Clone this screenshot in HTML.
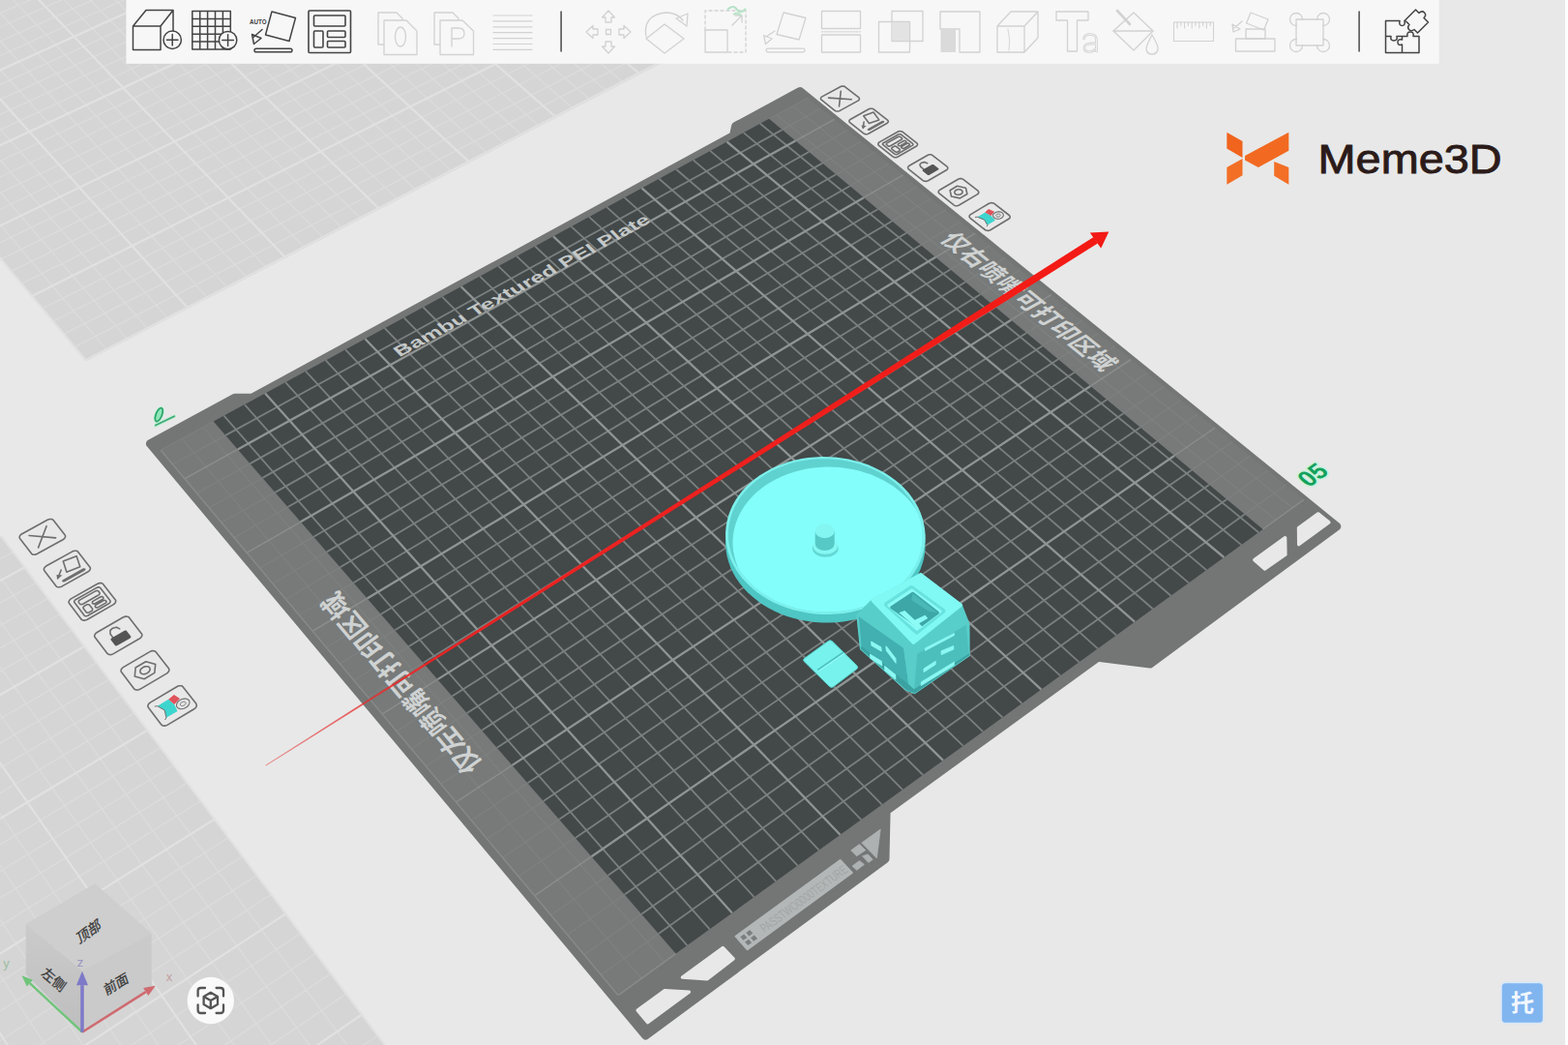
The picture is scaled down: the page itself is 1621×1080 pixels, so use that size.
<!DOCTYPE html><html><head><meta charset="utf-8"><title>view</title><style>html,body{margin:0;padding:0;background:#e8e8e8;overflow:hidden}svg{display:block}text{font-family:"Liberation Sans",sans-serif}</style></head><body>
<svg width="1621" height="1080" viewBox="0 0 1621 1080">
<rect width="1621" height="1080" fill="#e8e8e8"/><rect x="1618" width="3" height="1080" fill="#fdfdfd"/>
<g>
<path d="M89.6 369.7 L740.8 32.4 L381.7 -254.6 L-221.7 -0.6Z" fill="#d5d5d5" stroke="#d5d5d5" stroke-width="6" stroke-linejoin="round"/>
<path d="M110 361.1 L-205.1 -8.9 M131.2 350.1 L-185.8 -17 M152.2 339.2 L-166.6 -25.1 M173 328.4 L-147.6 -33.1 M214.1 307.1 L-110 -48.9 M234.5 296.6 L-91.3 -56.8 M254.6 286.1 L-72.8 -64.5 M274.6 275.7 L-54.5 -72.3 M314.1 255.3 L-18.1 -87.6 M333.7 245.1 L-0.1 -95.1 M353 235.1 L17.7 -102.7 M372.3 225.1 L35.5 -110.1 M410.2 205.4 L70.6 -124.9 M429 195.7 L88 -132.2 M447.7 186 L105.3 -139.5 M466.1 176.4 L122.5 -146.7 M502.7 157.5 L156.4 -161 M520.8 148.1 L173.3 -168.1 M538.7 138.8 L190 -175.1 M556.5 129.6 L206.6 -182.1 M591.7 111.4 L239.5 -195.9 M609.1 102.3 L255.7 -202.8 M626.3 93.4 L271.9 -209.6 M643.5 84.5 L288 -216.3 M677.4 66.9 L319.8 -229.7 M694.1 58.2 L335.6 -236.4 M710.8 49.6 L351.2 -242.9 M727.3 41.1 L366.8 -249.5 M77.3 358.7 L730.8 22.3 M66 345.3 L718 12.1 M54.9 332 L705.4 2 M43.9 318.9 L692.9 -8 M22.2 293.1 L668.1 -27.8 M11.6 280.4 L655.9 -37.5 M1 267.8 L643.8 -47.2 M-9.5 255.3 L631.8 -56.7 M-30.1 230.8 L608.2 -75.6 M-40.3 218.7 L596.5 -85 M-50.3 206.7 L584.9 -94.2 M-60.3 194.8 L573.4 -103.4 M-79.9 171.4 L550.7 -121.5 M-89.6 159.9 L539.5 -130.4 M-99.2 148.5 L528.4 -139.3 M-108.7 137.1 L517.4 -148.1 M-127.5 114.8 L495.7 -165.4 M-136.7 103.8 L485 -174 M-145.8 92.9 L474.3 -182.5 M-154.9 82.1 L463.7 -190.9 M-172.8 60.9 L442.9 -207.6 M-181.6 50.4 L432.6 -215.8 M-190.3 39.9 L422.3 -224 M-199 29.6 L412.2 -232.1 M-216.1 9.3 L392.2 -248.1 M-224.5 -0.8 L382.3 -256" stroke="#dcdcdc" stroke-width="1.3" fill="none"/>
<path d="M88.6 372.2 L-224.5 -0.8 M193.6 317.7 L-128.7 -41 M294.5 265.5 L-36.2 -80 M391.3 215.2 L53.1 -117.5 M484.5 166.9 L139.5 -153.9 M574.1 120.5 L223.1 -189 M660.5 75.7 L303.9 -223.1 M743.7 32.5 L382.3 -256 M88.6 372.2 L743.7 32.5 M33 305.9 L680.4 -17.9 M-19.9 243 L620 -66.2 M-70.2 183 L562 -112.5 M-118.1 125.9 L506.5 -156.8 M-163.9 71.4 L453.3 -199.3 M-207.6 19.4 L402.1 -240.1" stroke="#e1e1e1" stroke-width="2.2" fill="none"/>
</g>
<g>
<path d="M-656.2 1960.5 L453.5 1159.2 L0.7 557.6 L-959.9 1081.2Z" fill="#d5d5d5" stroke="#d5d5d5" stroke-width="6" stroke-linejoin="round"/>
<path d="M-619.8 1938.6 L-931.4 1063.1 M-581.2 1910.7 L-899.2 1045.6 M-543.2 1883.2 L-867.4 1028.3 M-505.6 1856.1 L-835.9 1011.1 M-431.9 1802.8 L-773.8 977.3 M-395.7 1776.7 L-743.3 960.7 M-360 1750.9 L-713.1 944.2 M-324.8 1725.4 L-683.1 927.9 M-255.6 1675.4 L-624.1 895.8 M-221.7 1650.9 L-595.1 880 M-188.2 1626.6 L-566.3 864.3 M-155 1602.7 L-537.8 848.8 M-90 1555.7 L-481.7 818.2 M-58 1532.6 L-454 803.1 M-26.5 1509.8 L-426.7 788.2 M4.7 1487.2 L-399.5 773.4 M66 1442.9 L-346 744.3 M96.1 1421.2 L-319.6 729.9 M125.8 1399.7 L-293.5 715.7 M155.3 1378.4 L-267.6 701.6 M213.1 1336.6 L-216.6 673.8 M241.5 1316.1 L-191.4 660.1 M269.6 1295.7 L-166.5 646.5 M297.4 1275.7 L-141.8 633.1 M352.1 1236.1 L-93 606.5 M379 1216.7 L-69 593.4 M405.6 1197.5 L-45.2 580.4 M431.9 1178.5 L-21.6 567.6 M-670.8 1932.1 L440.7 1136.8 M-682.6 1897.9 L423.7 1114.3 M-694.2 1864.2 L406.9 1092.1 M-705.6 1831.1 L390.4 1070.1 M-727.9 1766.5 L357.9 1027.1 M-738.7 1734.9 L342 1006 M-749.4 1703.9 L326.3 985.2 M-759.9 1673.3 L310.8 964.6 M-780.5 1613.5 L280.4 924.3 M-790.6 1584.3 L265.5 904.5 M-800.5 1555.5 L250.8 885 M-810.2 1527.2 L236.2 865.7 M-829.3 1471.8 L207.6 827.8 M-838.6 1444.7 L193.6 809.1 M-847.8 1418 L179.7 790.8 M-856.9 1391.6 L166 772.6 M-874.6 1340.1 L139.1 736.9 M-883.3 1314.9 L125.9 719.4 M-891.9 1290 L112.9 702.1 M-900.3 1265.5 L100 684.9 M-916.9 1217.4 L74.6 651.3 M-925 1193.9 L62.1 634.7 M-933 1170.7 L49.8 618.4 M-940.8 1147.8 L37.6 602.2 M-956.3 1102.8 L13.6 570.4 M-963.9 1080.8 L1.9 554.8" stroke="#dcdcdc" stroke-width="1.3" fill="none"/>
<path d="M-658.9 1966.9 L-963.9 1080.8 M-468.5 1829.3 L-804.7 994.1 M-290 1700.2 L-653.5 911.8 M-122.3 1579 L-509.6 833.4 M35.5 1465 L-372.6 758.8 M184.3 1357.4 L-242 687.6 M324.9 1255.8 L-117.3 619.7 M457.9 1159.7 L1.9 554.8 M-658.9 1966.9 L457.9 1159.7 M-716.8 1798.5 L374.1 1048.5 M-770.3 1643.2 L295.5 944.3 M-819.8 1499.3 L221.8 846.6 M-865.8 1365.7 L152.5 754.6 M-908.7 1241.3 L87.2 668 M-948.6 1125.2 L25.6 586.2" stroke="#e1e1e1" stroke-width="2.2" fill="none"/>
</g>
<path d="M667.4 1070.2 L915.2 887.7 L916.3 838 L1134.8 679.6 L1188.9 686.2 L1382 544 L827.1 94.3 L760.4 130.4 L758.2 140.4 L260.7 411.1 L242.8 411.1 L155.2 458.6Z" fill="#737675" stroke="#737675" stroke-width="8.6" stroke-linejoin="round"/>
<path d="M639.6 1028.3 L698.7 985.6 L220.7 435.6 L166.6 465.1Z" fill="#777a79"/>
<path d="M1305.5 547 L1348 516.3 L835 101 L795 122.8Z" fill="#777a79"/>
<path d="M698.7 985.6 L1305.5 547 L795 122.8 L220.7 435.6Z" fill="#434848"/>
<path d="M663.1 1011.3 L188.1 453.3 M686.9 994.1 L209.9 441.5 M1318.7 537.4 L802.7 118.6 M1336.2 524.8 L819.5 109.4 M621.9 1007.2 L680.8 965 M1286.8 531.5 L1329.2 501.1 M604.3 986.3 L663.2 944.7 M1268.3 516.1 L1310.7 486.1 M587.1 965.8 L645.7 924.6 M1250 500.9 L1292.3 471.2 M570 945.4 L628.5 904.8 M1231.9 485.8 L1274.1 456.5 M536.5 905.5 L594.7 865.9 M1196.3 456.2 L1238.4 427.6 M520.1 886 L578.1 846.8 M1178.8 441.7 L1220.8 413.4 M503.8 866.6 L561.7 828 M1161.5 427.3 L1203.4 399.3 M487.8 847.5 L545.5 809.3 M1144.3 413.1 L1186.2 385.3 M456.3 810 L513.7 772.8 M1110.6 385 L1152.3 357.9 M440.9 791.6 L498.1 754.8 M1094 371.2 L1135.6 344.4 M425.6 773.5 L482.7 737 M1077.6 357.6 L1119.1 331 M410.5 755.5 L467.4 719.5 M1061.3 344 L1102.8 317.8 M380.8 720.2 L437.5 685 M1029.3 317.4 L1070.6 291.8 M366.3 702.8 L422.7 668.1 M1013.5 304.3 L1054.8 278.9 M351.9 685.7 L408.2 651.3 M997.9 291.4 L1039.1 266.2 M337.7 668.7 L393.8 634.8 M982.5 278.5 L1023.6 253.7 M309.7 635.4 L365.5 602.2 M952.1 253.2 L993 228.9 M295.9 619.1 L351.6 586.2 M937.1 240.8 L977.9 216.7 M282.4 602.9 L337.9 570.4 M922.2 228.5 L963 204.6 M268.9 586.9 L324.3 554.8 M907.5 216.3 L948.2 192.7 M242.5 555.4 L297.5 524 M878.6 192.2 L919.1 169.1 M229.5 539.9 L284.4 508.9 M864.3 180.3 L904.7 157.5 M216.6 524.6 L271.4 493.9 M850.2 168.6 L890.5 145.9 M203.9 509.5 L258.5 479.1 M836.2 157 L876.4 134.6 M178.9 479.7 L233.2 449.9 M808.6 134.1 L848.7 112.1 M166.6 465.1 L220.7 435.6 M795 122.8 L835 101" stroke="#9a9e9e" stroke-opacity="0.2" stroke-width="1.1" fill="none"/>
<path d="M639.1 1028.7 L166.2 465.3 M639.6 1028.3 L698.7 985.6 M1305.5 547 L1348 516.3 M553.1 925.4 L611.5 885.2 M1214 471 L1256.2 442 M472 828.7 L529.5 790.9 M1127.4 399 L1169.2 371.5 M395.6 737.7 L452.4 702.1 M1045.2 330.7 L1086.6 304.7 M323.6 652 L379.6 618.4 M967.2 265.8 L1008.2 241.2 M255.6 571.1 L310.8 539.3 M893 204.2 L933.6 180.8 M191.4 494.5 L245.8 464.4 M822.4 145.5 L862.5 123.3" stroke="#b0b4b4" stroke-opacity="0.32" stroke-width="1.5" fill="none"/>
<path d="M710.4 977.1 L231.5 429.7 M733.7 960.3 L252.9 418.1 M779.6 927.1 L295.1 395.1 M802.2 910.8 L316 383.7 M824.6 894.6 L336.7 372.4 M846.7 878.6 L357.2 361.3 M890.3 847.1 L397.7 339.2 M911.8 831.6 L417.7 328.3 M933.1 816.2 L437.5 317.5 M954.2 801 L457.2 306.8 M995.7 770.9 L496.1 285.6 M1016.2 756.1 L515.3 275.1 M1036.4 741.5 L534.3 264.8 M1056.5 727 L553.2 254.5 M1096.1 698.4 L590.6 234.1 M1115.6 684.3 L609 224.1 M1134.9 670.3 L627.3 214.1 M1154.1 656.5 L645.5 204.2 M1191.8 629.2 L681.4 184.7 M1210.5 615.7 L699.1 175 M1228.9 602.4 L716.7 165.4 M1247.2 589.1 L734.2 155.9 M1283.3 563.1 L768.7 137.1 M1301.1 550.2 L785.8 127.8 M680.8 965 L1286.8 531.5 M663.2 944.7 L1268.3 516.1 M645.7 924.6 L1250 500.9 M628.5 904.8 L1231.9 485.8 M594.7 865.9 L1196.3 456.2 M578.1 846.8 L1178.8 441.7 M561.7 828 L1161.5 427.3 M545.5 809.3 L1144.3 413.1 M513.7 772.8 L1110.6 385 M498.1 754.8 L1094 371.2 M482.7 737 L1077.6 357.6 M467.4 719.5 L1061.3 344 M437.5 685 L1029.3 317.4 M422.7 668.1 L1013.5 304.3 M408.2 651.3 L997.9 291.4 M393.8 634.8 L982.5 278.5 M365.5 602.2 L952.1 253.2 M351.6 586.2 L937.1 240.8 M337.9 570.4 L922.2 228.5 M324.3 554.8 L907.5 216.3 M297.5 524 L878.6 192.2 M284.4 508.9 L864.3 180.3 M271.4 493.9 L850.2 168.6 M258.5 479.1 L836.2 157 M233.2 449.9 L808.6 134.1" stroke="#7a7f7f" stroke-width="1.8" fill="none"/>
<path d="M756.8 943.6 L274.1 406.5 M868.6 862.8 L377.5 350.2 M975 785.9 L476.7 296.2 M1076.4 712.6 L572 244.3 M1173 642.7 L663.5 194.4 M1265.3 576 L751.5 146.5 M611.5 885.2 L1214 471 M529.5 790.9 L1127.4 399 M452.4 702.1 L1045.2 330.7 M379.6 618.4 L967.2 265.8 M310.8 539.3 L893 204.2 M245.8 464.4 L822.4 145.5" stroke="#8f9494" stroke-width="2.3" fill="none"/>
<path d="M659.1 1044.1 L686.9 1023.8 L712.4 1025.2 L669.6 1056.6Z" fill="#e8e8e8" stroke="#e8e8e8" stroke-width="3.4" stroke-linejoin="round"/>
<path d="M705.4 1010 L747.2 979.5 L758.2 990.9 L731.3 1011.7Z" fill="#e8e8e8" stroke="#e8e8e8" stroke-width="3.4" stroke-linejoin="round"/>
<path d="M1362.7 530.9 L1342.5 545.7 L1342.7 562.7 L1373.9 539.9Z" fill="#e8e8e8" stroke="#e8e8e8" stroke-width="3.4" stroke-linejoin="round"/>
<path d="M1328.6 555.6 L1296.8 578.7 L1307.4 588 L1328.9 573.2Z" fill="#e8e8e8" stroke="#e8e8e8" stroke-width="3.4" stroke-linejoin="round"/>
<text transform="matrix(0.881,-0.473,0.70,0.72,413,369.2)" x="0" y="0" font-size="17" font-weight="bold" fill="#c4c8c8" textLength="296" lengthAdjust="spacingAndGlyphs" style="font-family:'Liberation Sans',sans-serif">Bambu Textured PEI Plate</text>
<text transform="matrix(-0.643,-0.766,0.89,-0.65,499,790)" x="0" y="0" font-size="26" font-weight="bold" fill="#cfd2d2" textLength="235" lengthAdjust="spacing" style="font-family:'Liberation Sans','Noto Sans CJK SC',sans-serif">仅左喷嘴可打印区域</text>
<text transform="matrix(0.777,0.629,-0.948,0.517,970.8,247.6)" x="0" y="0" font-size="24" font-weight="bold" fill="#cfd2d2" textLength="218" lengthAdjust="spacing" style="font-family:'Liberation Sans','Noto Sans CJK SC',sans-serif">仅右喷嘴可打印区域</text>
<path d="M760.6 967.7 L868.6 889 L880.8 901.9 L772.7 981.3Z" fill="#b3b7b7" stroke="#b3b7b7" stroke-width="2" stroke-linejoin="round"/>
<path d="M765.3 968.3 L769.2 965.5 L772.3 969 L768.5 971.8Z" fill="#7b7f7f"/>
<path d="M771.3 964 L775.1 961.1 L778.3 964.6 L774.4 967.5Z" fill="#7b7f7f"/>
<path d="M770.1 973.6 L774 970.8 L777.1 974.3 L773.2 977.1Z" fill="#7b7f7f"/>
<path d="M776 969.3 L779.9 966.5 L783.1 969.9 L779.2 972.8Z" fill="#7b7f7f"/>
<text transform="matrix(0.807,-0.591,0.677,0.752,790.5,964.1)" x="0" y="0" font-size="13" fill="#9ca0a0" fill-opacity="0.75" textLength="107.8" lengthAdjust="spacingAndGlyphs" style="font-family:'Liberation Sans',sans-serif">PASSTWO0000TEXTURE</text>
<path d="M890.8 871.1 L910.2 857.1 L906.4 886.9Z" fill="#adb1b1" stroke="#adb1b1" stroke-width="0.8" stroke-linejoin="round"/>
<path d="M879.8 878.8 L888.5 872.5 L894.8 878.7 L885.6 884.8Z" fill="#adb1b1" stroke="#adb1b1" stroke-width="0.8" stroke-linejoin="round"/>
<path d="M891.5 884.8 L897.3 882.9 L902.2 888.3 L897.8 891.5Z" fill="#adb1b1" stroke="#adb1b1" stroke-width="0.8" stroke-linejoin="round"/>
<path d="M881 895.1 L888.6 889.6 L893.4 893.4 L885.8 899.3Z" fill="#adb1b1" stroke="#adb1b1" stroke-width="0.8" stroke-linejoin="round"/>
<defs><linearGradient id="ax" gradientUnits="userSpaceOnUse" x1="274.7" y1="791.2" x2="1132.7" y2="248.2"><stop offset="0" stop-color="#e04040" stop-opacity="0.55"/><stop offset="0.2" stop-color="#ee2222" stop-opacity="0.95"/><stop offset="1" stop-color="#f41a14"/></linearGradient></defs>
<path d="M275 791.6 L1134.8 251.5 L1130.6 244.9 L274.4 790.8 Z" fill="url(#ax)"/>
<path d="M1146.3 239.6 L1126.8 240.6 L1138.2 256.6 Z" fill="#f21a14"/>
<path d="M930.8 509.2 L925.9 505.1 L920.7 501.3 L915.2 497.7 L909.5 494.5 L903.4 491.5 L897.2 488.9 L890.7 486.7 L884.1 484.8 L877.3 483.2 L870.5 482 L863.5 481.2 L856.5 480.8 L849.5 480.7 L842.6 481 L835.6 481.7 L828.8 482.7 L822 484.2 L815.4 485.9 L809 488.1 L802.7 490.5 L796.7 493.3 L791 496.5 L785.5 499.9 L780.4 503.6 L775.5 507.6 L771.1 511.9 L767 516.4 L763.3 521.2 L760 526.1 L757.2 531.2 L754.8 536.5 L752.9 541.9 L751.5 547.5 L750.6 553.1 L750.1 558.7 L750.2 564.4 L750.7 570.1 L751.8 575.7 L753.4 581.3 L755.4 586.9 L758 592.3 L761 597.5 L764.5 602.6 L768.5 607.5 L772.9 612.2 L777.7 616.6 L782.9 620.8 L788.4 624.7 L794.3 628.3 L800.5 631.5 L807 634.4 L813.7 636.9 L820.7 639 L827.8 640.7 L835 642.1 L842.3 643 L849.7 643.5 L857.1 643.6 L864.5 643.2 L871.9 642.5 L879.1 641.3 L886.2 639.7 L893.1 637.8 L899.9 635.4 L906.3 632.7 L912.5 629.6 L918.4 626.1 L924 622.4 L929.2 618.3 L933.9 614 L938.3 609.4 L942.3 604.5 L945.7 599.5 L948.8 594.3 L951.3 589 L953.3 583.5 L954.9 577.9 L955.9 572.3 L956.5 566.6 L956.5 560.9 L956 555.2 L955 549.6 L953.6 544 L951.7 538.6 L949.2 533.2 L946.4 528 L943.1 523 L939.4 518.2 L935.3 513.6Z" fill="#4ec6c4"/>
<path d="M750.1 558.7 L956.5 560.9 L956.5 552.3 L750.1 550.1 Z" fill="#4ec6c4"/>
<path d="M930.8 500.6 L925.9 496.5 L920.7 492.7 L915.2 489.1 L909.5 485.9 L903.4 482.9 L897.2 480.3 L890.7 478.1 L884.1 476.2 L877.3 474.6 L870.5 473.4 L863.5 472.6 L856.5 472.2 L849.5 472.1 L842.6 472.4 L835.6 473.1 L828.8 474.1 L822 475.6 L815.4 477.3 L809 479.5 L802.7 481.9 L796.7 484.7 L791 487.9 L785.5 491.3 L780.4 495 L775.5 499 L771.1 503.3 L767 507.8 L763.3 512.6 L760 517.5 L757.2 522.6 L754.8 527.9 L752.9 533.3 L751.5 538.9 L750.6 544.5 L750.1 550.1 L750.2 555.8 L750.7 561.5 L751.8 567.1 L753.4 572.7 L755.4 578.3 L758 583.7 L761 588.9 L764.5 594 L768.5 598.9 L772.9 603.6 L777.7 608 L782.9 612.2 L788.4 616.1 L794.3 619.7 L800.5 622.9 L807 625.8 L813.7 628.3 L820.7 630.4 L827.8 632.1 L835 633.5 L842.3 634.4 L849.7 634.9 L857.1 635 L864.5 634.6 L871.9 633.9 L879.1 632.7 L886.2 631.1 L893.1 629.2 L899.9 626.8 L906.3 624.1 L912.5 621 L918.4 617.5 L924 613.8 L929.2 609.7 L933.9 605.4 L938.3 600.8 L942.3 595.9 L945.7 590.9 L948.8 585.7 L951.3 580.4 L953.3 574.9 L954.9 569.3 L955.9 563.7 L956.5 558 L956.5 552.3 L956 546.6 L955 541 L953.6 535.4 L951.7 530 L949.2 524.6 L946.4 519.4 L943.1 514.4 L939.4 509.6 L935.3 505Z" fill="#7cf0ec"/>
<clipPath id="dc"><path d="M928.7 502 L924 498 L918.9 494.2 L913.6 490.8 L907.9 487.6 L902.1 484.8 L896 482.2 L889.7 480 L883.3 478.2 L876.7 476.7 L870 475.5 L863.3 474.7 L856.5 474.3 L849.6 474.2 L842.8 474.5 L836.1 475.2 L829.4 476.2 L822.8 477.6 L816.4 479.3 L810.2 481.4 L804.1 483.8 L798.2 486.5 L792.6 489.6 L787.3 492.9 L782.3 496.5 L777.6 500.4 L773.3 504.6 L769.3 509 L765.7 513.6 L762.6 518.4 L759.8 523.4 L757.5 528.6 L755.7 533.8 L754.3 539.2 L753.4 544.6 L752.9 550.1 L753 555.7 L753.5 561.2 L754.6 566.7 L756.1 572.1 L758.1 577.5 L760.6 582.8 L763.6 587.9 L767 592.8 L770.8 597.6 L775.1 602.2 L779.8 606.5 L784.8 610.5 L790.2 614.3 L796 617.7 L802 620.9 L808.3 623.7 L814.8 626.1 L821.6 628.2 L828.5 629.9 L835.5 631.2 L842.6 632 L849.8 632.5 L857 632.6 L864.2 632.3 L871.4 631.5 L878.4 630.4 L885.3 628.9 L892 627 L898.6 624.7 L904.9 622 L910.9 619 L916.6 615.7 L922 612 L927 608.1 L931.7 603.9 L935.9 599.4 L939.8 594.7 L943.2 589.8 L946.1 584.8 L948.6 579.5 L950.6 574.2 L952.1 568.8 L953.1 563.3 L953.6 557.8 L953.7 552.3 L953.2 546.7 L952.3 541.3 L950.9 535.9 L949 530.5 L946.6 525.4 L943.9 520.3 L940.7 515.4 L937 510.7 L933 506.2Z"/></clipPath>
<path d="M928.7 502 L924 498 L918.9 494.2 L913.6 490.8 L907.9 487.6 L902.1 484.8 L896 482.2 L889.7 480 L883.3 478.2 L876.7 476.7 L870 475.5 L863.3 474.7 L856.5 474.3 L849.6 474.2 L842.8 474.5 L836.1 475.2 L829.4 476.2 L822.8 477.6 L816.4 479.3 L810.2 481.4 L804.1 483.8 L798.2 486.5 L792.6 489.6 L787.3 492.9 L782.3 496.5 L777.6 500.4 L773.3 504.6 L769.3 509 L765.7 513.6 L762.6 518.4 L759.8 523.4 L757.5 528.6 L755.7 533.8 L754.3 539.2 L753.4 544.6 L752.9 550.1 L753 555.7 L753.5 561.2 L754.6 566.7 L756.1 572.1 L758.1 577.5 L760.6 582.8 L763.6 587.9 L767 592.8 L770.8 597.6 L775.1 602.2 L779.8 606.5 L784.8 610.5 L790.2 614.3 L796 617.7 L802 620.9 L808.3 623.7 L814.8 626.1 L821.6 628.2 L828.5 629.9 L835.5 631.2 L842.6 632 L849.8 632.5 L857 632.6 L864.2 632.3 L871.4 631.5 L878.4 630.4 L885.3 628.9 L892 627 L898.6 624.7 L904.9 622 L910.9 619 L916.6 615.7 L922 612 L927 608.1 L931.7 603.9 L935.9 599.4 L939.8 594.7 L943.2 589.8 L946.1 584.8 L948.6 579.5 L950.6 574.2 L952.1 568.8 L953.1 563.3 L953.6 557.8 L953.7 552.3 L953.2 546.7 L952.3 541.3 L950.9 535.9 L949 530.5 L946.6 525.4 L943.9 520.3 L940.7 515.4 L937 510.7 L933 506.2Z" fill="#5fd2cf"/>
<path d="M933.3 510.4 L928.6 506.4 L923.5 502.6 L918.2 499.2 L912.5 496 L906.7 493.2 L900.6 490.6 L894.3 488.4 L887.9 486.6 L881.3 485.1 L874.6 483.9 L867.9 483.1 L861.1 482.7 L854.2 482.6 L847.4 482.9 L840.7 483.6 L834 484.6 L827.4 486 L821 487.7 L814.8 489.8 L808.7 492.2 L802.8 494.9 L797.2 498 L791.9 501.3 L786.9 504.9 L782.2 508.8 L777.9 513 L773.9 517.4 L770.3 522 L767.2 526.8 L764.4 531.8 L762.1 537 L760.3 542.2 L758.9 547.6 L758 553 L757.5 558.5 L757.6 564.1 L758.1 569.6 L759.2 575.1 L760.7 580.5 L762.7 585.9 L765.2 591.2 L768.2 596.3 L771.6 601.2 L775.4 606 L779.7 610.6 L784.4 614.9 L789.4 618.9 L794.8 622.7 L800.6 626.1 L806.6 629.3 L812.9 632.1 L819.4 634.5 L826.2 636.6 L833.1 638.3 L840.1 639.6 L847.2 640.4 L854.4 640.9 L861.6 641 L868.8 640.7 L876 639.9 L883 638.8 L889.9 637.3 L896.6 635.4 L903.2 633.1 L909.5 630.4 L915.5 627.4 L921.2 624.1 L926.6 620.4 L931.6 616.5 L936.3 612.3 L940.5 607.8 L944.4 603.1 L947.8 598.2 L950.7 593.2 L953.2 587.9 L955.2 582.6 L956.7 577.2 L957.7 571.7 L958.2 566.2 L958.3 560.7 L957.8 555.1 L956.9 549.7 L955.5 544.3 L953.6 538.9 L951.2 533.8 L948.5 528.7 L945.3 523.8 L941.6 519.1 L937.6 514.6Z" fill="#84fefa" clip-path="url(#dc)"/>
<ellipse cx="853.3" cy="566.8" rx="13.4" ry="9" fill="#63d8d5"/>
<ellipse cx="853.2" cy="564.6" rx="12.6" ry="8.2" fill="#86f8f3"/>
<path d="M842.7 548.9 L842.7 561.8 A10 7.2 0 0 0 862.7 561.8 L862.7 548.9 Z" fill="#56c9c7"/>
<ellipse cx="852.7" cy="548.9" rx="10" ry="7.3" fill="#84f6f1"/>
<path d="M831.3 680.6 L856.6 662.3 Q858.6 661 860.4 662.8 L886.2 688.2 Q887.6 690 885.8 691.4 L861.5 709.8 Q859.5 711.2 857.6 709.6 L831.2 683.6 Q829.8 682 831.3 680.6Z" fill="#78f2ed" stroke="#54cbc8" stroke-width="1"/>
<path d="M845.2 692.3 L872.2 673.8" stroke="#4cc0be" stroke-width="1.6" fill="none"/>
<path d="M846.4 693.6 L873.4 675.2" stroke="#9afcf8" stroke-width="1" fill="none"/>
<path d="M951.9 593.1 L994 625.1 L1001.7 645 L1001.9 677.6 L945.7 716.4 L936.9 713.1 L889.7 670.6 L886.1 635.8 L901.4 620.3 Z" fill="#57ceca" stroke="#57ceca" stroke-width="1.6" stroke-linejoin="round"/>
<path d="M889.7 670.6 L936.9 713.1 L945.7 716.4 L1001.9 677.6 L1001.7 674.4 L945 711.9 L939.4 707.1 L890.8 666.8 Z" fill="#3ba1a1" />
<path d="M887.8 637.2 L934.2 670 L939.2 707.1 L890.6 667.8 Z" fill="#42b0b0" />
<path d="M948.1 676.1 L998.9 645.8 L1001.4 675.8 L945 712.2 Z" fill="#4cbfbd" />
<path d="M934.2 670 L945 664.2 L948.1 676.1 L945 712.2 L939.2 707.1 Z" fill="#58cdca" />
<path d="M902.2 620.6 L951.9 593.9 L993.3 625.3 L944.4 664.2 Z" fill="#80f8f3" stroke="#80f8f3" stroke-width="3.5" stroke-linejoin="round"/>
<path d="M916.5 624.7 L942.2 607.5 L975 631.4 L947.8 653.1 Z" fill="#68e2de" stroke="#68e2de" stroke-width="5" stroke-linejoin="round"/>
<path d="M918.6 625.6 L942.5 609.7 L972.5 631.7 L948.1 650.6 Z" fill="#8afbf6" stroke="#8afbf6" stroke-width="2.5" stroke-linejoin="round"/>
<path d="M921.7 627.8 L943.6 613.3 L969.4 633.3 L950 647.8 Z" fill="#3da7a8" stroke="#3da7a8" stroke-width="3" stroke-linejoin="round"/>
<path d="M943.6 613.3 L969.4 633.3 L960.3 631.7 L942.2 620.3 Z" fill="#49b8b7" />
<path d="M929.4 633.3 L935.3 631.1 L945.7 640.8 L956.4 635.8 L959.2 638.9 L950.3 644.2 L953.6 648.1 L949.2 650.3 Z" fill="#8cfbf6" />
<path d="M900.8 663.3 L910.6 668.9 L911.1 672.8 L901.1 666.9 Z" fill="#8cf8f3" stroke="#8cf8f3" stroke-width="1.2" stroke-linejoin="round"/>
<path d="M899.7 676.4 L911.1 683.6 L911.7 687.8 L900 680.3 Z" fill="#8cf8f3" stroke="#8cf8f3" stroke-width="1.2" stroke-linejoin="round"/>
<path d="M916.1 668.1 L925.8 680.6 L926.1 685 L916.4 672.2 Z" fill="#8cf8f3" stroke="#8cf8f3" stroke-width="1.2" stroke-linejoin="round"/>
<path d="M914.7 688.6 L925.6 697.5 L925.8 701.9 L915 692.8 Z" fill="#8cf8f3" stroke="#8cf8f3" stroke-width="1.2" stroke-linejoin="round"/>
<path d="M956.4 670 L986.4 654.4 L986.4 656.7 L956.4 672.5 Z" fill="#8cf8f3" stroke="#8cf8f3" stroke-width="0.8" stroke-linejoin="round"/>
<path d="M973.1 672.8 L985.8 667.5 L985.8 671.1 L973.1 676.7 Z" fill="#8cf8f3" stroke="#8cf8f3" stroke-width="0.8" stroke-linejoin="round"/>
<path d="M955 691.1 L967.2 683.3 L967.2 686.7 L955 694.7 Z" fill="#8cf8f3" stroke="#8cf8f3" stroke-width="0.8" stroke-linejoin="round"/>
<path d="M952.2 705 L986.4 684.2 L986.4 687.5 L952.2 708.6 Z" fill="#8cf8f3" stroke="#8cf8f3" stroke-width="0.8" stroke-linejoin="round"/>
<path d="M55.1 537.5 L54.4 536.9 L53.2 536.5 L51.9 536.5 L50.5 536.8 L49.1 537.3 L22.8 551.7 L21.6 552.5 L20.7 553.5 L20.2 554.6 L20.2 555.6 L20.5 556.4 L32.5 572.1 L33.3 572.8 L34.4 573.2 L35.7 573.2 L37.2 572.9 L38.6 572.3 L65 557.8 L66.2 556.9 L67 555.9 L67.5 554.9 L67.6 553.9 L67.2 553Z M30.1 553.5 L57.6 555.9 M39.6 565.9 L48.1 543.7" fill="none" stroke="#6e6e6e" stroke-width="1.6" stroke-linejoin="round" stroke-linecap="round"/>
<path d="M80.6 570.3 L79.8 569.6 L78.7 569.3 L77.4 569.2 L75.9 569.5 L74.6 570.1 L48.1 584.8 L46.9 585.7 L46 586.7 L45.5 587.7 L45.4 588.8 L45.8 589.7 L58 605.8 L58.8 606.4 L60 606.8 L61.3 606.8 L62.8 606.5 L64.2 605.9 L90.8 591 L92 590.2 L92.8 589.2 L93.3 588.1 L93.4 587 L93 586.2Z M68.9 591.2 L65.3 580 L79.1 574.7 L82.8 585.8Z M63.2 589 L59.8 597.5" fill="none" stroke="#6e6e6e" stroke-width="1.6" stroke-linejoin="round" stroke-linecap="round"/>
<path d="M59 599.1 L64.5 594.6 L58.5 594Z M88.2 587.6 L87.8 587.4 L87.3 587.2 L86.8 587.2 L86.2 587.3 L85.6 587.6 L65.3 598.9 L64.8 599.3 L64.5 599.7 L64.2 600.1 L64.2 600.6 L64.4 601 L64.5 601.2 L64.9 601.5 L65.4 601.6 L65.9 601.6 L66.5 601.5 L67.1 601.2 L87.4 589.9 L87.9 589.5 L88.3 589.1 L88.5 588.7 L88.5 588.2 L88.3 587.9Z" fill="#6e6e6e"/>
<path d="M106.6 603.7 L105.8 603 L104.7 602.6 L103.3 602.6 L101.8 602.9 L100.5 603.5 L73.8 618.6 L72.6 619.4 L71.7 620.5 L71.2 621.6 L71.1 622.6 L71.5 623.5 L84 640 L84.9 640.7 L86 641.1 L87.4 641.1 L88.9 640.8 L90.3 640.2 L117.1 624.9 L118.3 624 L119.1 623 L119.6 621.9 L119.7 620.8 L119.3 619.9Z M103.6 607.6 L103.1 607.2 L102.4 606.9 L101.6 606.9 L100.8 607.1 L100 607.4 L78.2 619.7 L77.5 620.2 L77 620.9 L76.7 621.5 L76.7 622.1 L76.9 622.6 L87.1 636.1 L87.6 636.5 L88.3 636.7 L89.1 636.7 L89.9 636.5 L90.8 636.2 L112.6 623.7 L113.3 623.2 L113.8 622.6 L114.1 622 L114.1 621.4 L113.9 620.8Z M101.8 611 L101.4 610.7 L100.8 610.5 L100.1 610.5 L99.4 610.6 L98.7 610.9 L82.5 620.1 L81.9 620.5 L81.5 621 L81.2 621.6 L81.2 622.1 L81.4 622.6 L82.5 624.1 L83 624.4 L83.5 624.6 L84.2 624.6 L84.9 624.5 L85.7 624.2 L101.8 615 L102.4 614.6 L102.9 614.1 L103.1 613.5 L103.1 613 L102.9 612.5Z M92.5 625.2 L92.1 624.9 L91.5 624.7 L90.8 624.7 L90.1 624.8 L89.4 625.1 L87.3 626.3 L86.7 626.8 L86.2 627.3 L86 627.8 L86 628.4 L86.2 628.8 L89.2 632.7 L89.6 633.1 L90.1 633.3 L90.8 633.3 L91.6 633.1 L92.3 632.8 L94.4 631.6 L95 631.2 L95.4 630.7 L95.7 630.1 L95.7 629.6 L95.5 629.1Z M106.4 617 L106.1 616.7 L105.6 616.6 L105 616.6 L104.4 616.7 L103.8 617 L96.5 621.1 L96 621.5 L95.6 621.9 L95.4 622.4 L95.4 622.8 L95.5 623.2 L95.9 623.6 L96.2 623.9 L96.7 624.1 L97.2 624.1 L97.9 624 L98.4 623.7 L105.8 619.5 L106.3 619.2 L106.7 618.7 L106.9 618.3 L106.9 617.8 L106.7 617.5Z M109.4 620.9 L109.1 620.6 L108.6 620.5 L108 620.4 L107.4 620.6 L106.8 620.8 L99.4 625 L98.9 625.4 L98.6 625.8 L98.4 626.3 L98.3 626.7 L98.5 627.1 L98.8 627.5 L99.2 627.8 L99.7 628 L100.2 628 L100.8 627.9 L101.4 627.6 L108.8 623.4 L109.3 623 L109.7 622.6 L109.9 622.1 L109.9 621.7 L109.7 621.3Z" fill="none" stroke="#6e6e6e" stroke-width="1.6" stroke-linejoin="round" stroke-linecap="round"/>
<path d="M133.5 638.2 L132.6 637.5 L131.5 637.2 L130.1 637.1 L128.6 637.4 L127.2 638 L100.4 653.5 L99.2 654.3 L98.3 655.4 L97.8 656.5 L97.7 657.6 L98.1 658.6 L111 675.4 L111.8 676.1 L113 676.5 L114.4 676.6 L115.9 676.3 L117.3 675.6 L144.2 660 L145.5 659.1 L146.3 658 L146.8 656.9 L146.8 655.8 L146.4 654.9Z M116.7 658.7 L114 655.2 L113.9 651.7 L116.5 649.2 L120.4 648.3 L123.7 649.9" fill="none" stroke="#6e6e6e" stroke-width="1.6" stroke-linejoin="round" stroke-linecap="round"/>
<path d="M130.9 652 L130.6 651.7 L130.1 651.6 L129.5 651.6 L128.9 651.7 L128.3 651.9 L115.6 659.3 L115.1 659.7 L114.7 660.1 L114.5 660.6 L114.5 661 L114.7 661.4 L118.9 667 L119.2 667.3 L119.7 667.4 L120.3 667.4 L120.9 667.3 L121.5 667 L134.3 659.7 L134.8 659.3 L135.2 658.8 L135.4 658.4 L135.4 657.9 L135.2 657.5Z" fill="#555"/>
<path d="M161.1 673.8 L160.3 673.1 L159.1 672.7 L157.7 672.6 L156.2 672.9 L154.8 673.6 L127.8 689.4 L126.5 690.3 L125.6 691.4 L125.1 692.5 L125.1 693.6 L125.5 694.6 L138.7 711.9 L139.5 712.6 L140.7 713 L142.2 713.1 L143.7 712.7 L145.1 712.1 L172.2 696.1 L173.5 695.1 L174.3 694.1 L174.8 692.9 L174.8 691.8 L174.4 690.8Z M160.7 686.4 L150.8 683.7 L140.1 690 L139.3 699 L149.1 701.8 L159.8 695.4Z M154.6 690 L153.7 689.2 L152.4 688.8 L150.9 688.7 L149.3 689.1 L147.7 689.8 L146.4 690.8 L145.4 691.9 L144.9 693.2 L144.9 694.4 L145.3 695.4 L146.3 696.2 L147.6 696.6 L149.1 696.7 L150.7 696.4 L152.2 695.7 L153.6 694.7 L154.5 693.5 L155.1 692.2 L155.1 691Z" fill="none" stroke="#6e6e6e" stroke-width="1.6" stroke-linejoin="round" stroke-linecap="round"/>
<path d="M189.2 709.9 L188.3 709.1 L187.1 708.7 L185.7 708.7 L184.2 709 L182.8 709.7 L155.6 725.9 L154.3 726.8 L153.4 727.9 L153 729.1 L152.9 730.2 L153.4 731.2 L166.8 748.9 L167.7 749.7 L168.9 750.1 L170.4 750.1 L171.9 749.8 L173.3 749.1 L200.7 732.7 L201.9 731.8 L202.8 730.7 L203.2 729.5 L203.2 728.3 L202.8 727.3Z" fill="none" stroke="#6e6e6e" stroke-width="1.6" stroke-linejoin="round" stroke-linecap="round"/>
<path d="M162.7 729.7 L174.2 722.8 L180.2 728 L183.5 734.9 L171.9 741.8 L170.2 734Z" fill="#3ed5cf"/>
<path d="M174.2 722.8 L179.9 718.1 L186 721.9 L180.2 728Z" fill="#e0525c"/>
<path d="M159.8 730.1 L162.7 729.7 L170.2 734 L171.9 741.8 L170.5 744" fill="none" stroke="#6e6e6e" stroke-width="1"/>
<path d="M195.3 723.7 L194 722.7 L192.3 722.1 L190.3 722.1 L188.2 722.5 L186.2 723.4 L184.4 724.8 L183.2 726.3 L182.5 728 L182.5 729.6 L183.1 731 L184.3 732.1 L186.1 732.6 L188.1 732.7 L190.2 732.2 L192.2 731.3 L194 730 L195.2 728.4 L195.9 726.7 L195.9 725.1Z" fill="#e4e4e4" stroke="#6e6e6e" stroke-width="1.1"/>
<path d="M191.7 725.9 L191.2 725.4 L190.5 725.2 L189.7 725.2 L188.8 725.4 L187.9 725.7 L187.2 726.3 L186.7 726.9 L186.4 727.6 L186.4 728.3 L186.7 728.9 L187.2 729.3 L187.9 729.5 L188.7 729.6 L189.6 729.4 L190.4 729 L191.2 728.4 L191.7 727.8 L192 727.1 L192 726.4Z" fill="none" stroke="#6e6e6e" stroke-width="0.9"/>
<path d="M873.7 89.8 L872.9 89.3 L871.8 89.1 L870.7 89.1 L869.6 89.3 L868.6 89.7 L849.9 99.9 L849.1 100.4 L848.6 101.1 L848.4 101.9 L848.6 102.6 L849.2 103.2 L863.1 114.3 L863.9 114.7 L865 115 L866.1 115 L867.2 114.8 L868.3 114.4 L887 104.1 L887.8 103.5 L888.3 102.8 L888.4 102.1 L888.2 101.3 L887.7 100.7Z M856.5 101.1 L880.3 102.8 M867.5 109.9 L869.3 94.2" fill="none" stroke="#6e6e6e" stroke-width="1.6" stroke-linejoin="round" stroke-linecap="round"/>
<path d="M903.2 112.9 L902.4 112.5 L901.4 112.2 L900.2 112.2 L899.1 112.4 L898.1 112.8 L879.4 123.2 L878.6 123.8 L878 124.5 L877.9 125.3 L878.1 126 L878.6 126.6 L892.8 137.9 L893.7 138.4 L894.7 138.6 L895.9 138.7 L897 138.4 L898.1 138 L916.8 127.5 L917.6 126.9 L918.1 126.2 L918.3 125.4 L918.1 124.7 L917.5 124.1Z M898.5 127.6 L892.7 119.8 L903 116 L908.8 123.9Z M893.1 126.1 L892.3 132.1" fill="none" stroke="#6e6e6e" stroke-width="1.6" stroke-linejoin="round" stroke-linecap="round"/>
<path d="M892.1 133.3 L895.6 130 L890.4 129.6Z M913.8 125.1 L913.5 124.9 L913 124.8 L912.5 124.8 L912.1 124.9 L911.6 125.1 L897.3 133.1 L897 133.3 L896.8 133.6 L896.7 134 L896.8 134.3 L897 134.5 L897.2 134.7 L897.6 134.9 L898 135 L898.5 135 L899 134.9 L899.4 134.7 L913.7 126.7 L914 126.5 L914.2 126.2 L914.3 125.9 L914.2 125.5 L914 125.3Z" fill="#6e6e6e"/>
<path d="M933.2 136.4 L932.4 135.9 L931.3 135.7 L930.2 135.6 L929 135.8 L928 136.3 L909.2 146.9 L908.4 147.5 L907.9 148.2 L907.8 149 L908 149.7 L908.5 150.4 L923 161.9 L923.9 162.4 L925 162.6 L926.1 162.7 L927.3 162.4 L928.3 162 L947.1 151.3 L947.9 150.7 L948.4 149.9 L948.6 149.2 L948.3 148.4 L947.8 147.8Z M931.6 139.1 L931.1 138.8 L930.5 138.7 L929.8 138.7 L929.2 138.8 L928.6 139 L913.3 147.7 L912.8 148 L912.5 148.5 L912.4 148.9 L912.5 149.4 L912.9 149.7 L924.7 159.1 L925.2 159.4 L925.8 159.5 L926.5 159.6 L927.2 159.4 L927.8 159.2 L943.1 150.4 L943.6 150.1 L943.9 149.7 L943.9 149.2 L943.8 148.8 L943.5 148.4Z M930.9 141.6 L930.5 141.3 L930 141.2 L929.4 141.2 L928.8 141.3 L928.3 141.5 L917 147.9 L916.5 148.2 L916.3 148.6 L916.2 149 L916.3 149.4 L916.6 149.7 L917.9 150.7 L918.4 151 L918.9 151.1 L919.5 151.1 L920.1 151 L920.6 150.8 L931.9 144.3 L932.3 144 L932.6 143.7 L932.7 143.3 L932.5 142.9 L932.3 142.6Z M926.6 151.5 L926.2 151.3 L925.6 151.1 L925.1 151.1 L924.5 151.2 L924 151.5 L922.5 152.3 L922.1 152.6 L921.8 153 L921.7 153.4 L921.9 153.7 L922.1 154.1 L925.6 156.8 L926 157 L926.5 157.1 L927.1 157.2 L927.7 157.1 L928.2 156.8 L929.7 156 L930.1 155.7 L930.4 155.3 L930.4 154.9 L930.3 154.6 L930 154.2Z M936.3 145.8 L935.9 145.6 L935.5 145.5 L935 145.4 L934.5 145.5 L934.1 145.7 L928.9 148.6 L928.6 148.9 L928.4 149.2 L928.3 149.5 L928.4 149.8 L928.6 150.1 L929 150.4 L929.4 150.6 L929.8 150.7 L930.3 150.7 L930.8 150.6 L931.2 150.5 L936.4 147.5 L936.7 147.3 L936.9 147 L937 146.6 L936.9 146.3 L936.7 146.1Z M939.7 148.5 L939.4 148.3 L938.9 148.2 L938.4 148.1 L938 148.2 L937.5 148.4 L932.4 151.4 L932 151.6 L931.8 151.9 L931.8 152.2 L931.8 152.6 L932.1 152.8 L932.5 153.1 L932.8 153.3 L933.3 153.4 L933.7 153.4 L934.2 153.4 L934.7 153.2 L939.8 150.2 L940.2 150 L940.4 149.7 L940.4 149.3 L940.3 149 L940.1 148.8Z" fill="none" stroke="#6e6e6e" stroke-width="1.6" stroke-linejoin="round" stroke-linecap="round"/>
<path d="M964.1 160.6 L963.3 160.1 L962.2 159.8 L961 159.8 L959.9 160 L958.8 160.5 L940 171.3 L939.2 171.9 L938.7 172.6 L938.6 173.4 L938.8 174.2 L939.4 174.8 L954.2 186.6 L955 187.1 L956.1 187.3 L957.3 187.4 L958.5 187.1 L959.5 186.7 L978.4 175.8 L979.2 175.1 L979.7 174.4 L979.8 173.6 L979.6 172.8 L979 172.2Z M954.9 174.9 L951.8 172.4 L950.9 170 L952.6 168.3 L955.6 167.6 L958.7 168.7" fill="none" stroke="#6e6e6e" stroke-width="1.6" stroke-linejoin="round" stroke-linecap="round"/>
<path d="M965.3 170.2 L964.9 170 L964.5 169.9 L964 169.9 L963.5 170 L963.1 170.2 L954.2 175.3 L953.8 175.6 L953.6 175.9 L953.6 176.2 L953.7 176.5 L953.9 176.8 L958.8 180.7 L959.2 180.9 L959.6 181 L960.1 181 L960.6 180.9 L961 180.7 L969.9 175.6 L970.3 175.3 L970.5 175 L970.5 174.7 L970.4 174.3 L970.2 174.1Z" fill="#555"/>
<path d="M995.8 185.4 L994.9 184.9 L993.8 184.6 L992.7 184.6 L991.5 184.8 L990.5 185.2 L971.6 196.3 L970.8 196.9 L970.3 197.7 L970.1 198.5 L970.4 199.2 L971 199.9 L986.1 211.9 L987 212.4 L988.1 212.7 L989.3 212.7 L990.4 212.5 L991.5 212 L1010.4 200.9 L1011.2 200.2 L1011.7 199.5 L1011.8 198.7 L1011.5 197.9 L1011 197.2Z M998.4 194.2 L989.5 192.3 L982.1 196.7 L983.5 203 L992.4 204.9 L999.9 200.5Z M994.2 196.7 L993.2 196.1 L992.1 195.8 L990.8 195.8 L989.5 196 L988.4 196.5 L987.5 197.2 L987 198 L986.8 198.9 L987.1 199.7 L987.7 200.5 L988.7 201 L989.9 201.3 L991.2 201.3 L992.4 201.1 L993.6 200.6 L994.4 199.9 L995 199.1 L995.1 198.2 L994.8 197.4Z" fill="none" stroke="#6e6e6e" stroke-width="1.6" stroke-linejoin="round" stroke-linecap="round"/>
<path d="M1027.8 210.4 L1026.9 209.9 L1025.8 209.7 L1024.6 209.6 L1023.5 209.9 L1022.4 210.3 L1003.5 221.6 L1002.7 222.2 L1002.2 223 L1002.1 223.8 L1002.3 224.6 L1002.9 225.3 L1018.4 237.5 L1019.3 238 L1020.4 238.3 L1021.6 238.4 L1022.8 238.1 L1023.8 237.7 L1042.8 226.3 L1043.6 225.6 L1044.1 224.8 L1044.2 224 L1043.9 223.2 L1043.3 222.5Z" fill="none" stroke="#6e6e6e" stroke-width="1.6" stroke-linejoin="round" stroke-linecap="round"/>
<path d="M1010.4 224.2 L1018.3 219.5 L1024.6 223 L1028.9 227.8 L1020.9 232.6 L1017.6 227.2Z" fill="#3ed5cf"/>
<path d="M1018.3 219.5 L1022 216.1 L1028 218.8 L1024.6 223Z" fill="#e0525c"/>
<path d="M1008 224.5 L1010.4 224.2 L1017.6 227.2 L1020.9 232.6 L1020.2 234.1" fill="none" stroke="#6e6e6e" stroke-width="1"/>
<path d="M1036.2 220 L1034.9 219.3 L1033.3 218.9 L1031.6 218.9 L1030 219.2 L1028.5 219.9 L1027.3 220.8 L1026.7 221.9 L1026.5 223 L1026.9 224.1 L1027.7 225.1 L1029 225.8 L1030.6 226.2 L1032.3 226.3 L1033.9 226 L1035.4 225.3 L1036.5 224.4 L1037.2 223.3 L1037.4 222.1 L1037 221Z" fill="#e4e4e4" stroke="#6e6e6e" stroke-width="1.1"/>
<path d="M1033.7 221.5 L1033.2 221.2 L1032.5 221.1 L1031.8 221.1 L1031.1 221.2 L1030.5 221.5 L1030 221.8 L1029.8 222.3 L1029.7 222.8 L1029.8 223.2 L1030.2 223.6 L1030.7 223.9 L1031.4 224.1 L1032.1 224.1 L1032.8 224 L1033.4 223.7 L1033.8 223.3 L1034.1 222.9 L1034.2 222.4 L1034 221.9Z" fill="none" stroke="#6e6e6e" stroke-width="0.9"/>
<text transform="matrix(0.814,-0.581,0.855,0.692,1353.2,504.2)" x="0" y="0" font-size="24" font-weight="bold" fill="#c6f2d9" stroke="#c6f2d9" stroke-width="3.2" stroke-linejoin="round" opacity="0.9" style="font-family:'Liberation Sans',sans-serif">05</text>
<text transform="matrix(0.814,-0.581,0.855,0.692,1353.2,504.2)" x="0" y="0" font-size="24" font-weight="bold" fill="#12a15c" style="font-family:'Liberation Sans',sans-serif">05</text>
<g transform="translate(164.3 428.6) rotate(22)"><ellipse rx="3.3" ry="7.6" fill="#8fe6b8" stroke="#bdf0d5" stroke-width="3" opacity=".8"/><ellipse rx="3.1" ry="7.4" fill="#8fe6b8" stroke="#2aa468" stroke-width="1.7"/></g>
<path d="M160.8 439.6 L180.2 430.2" stroke="#b9efd2" stroke-width="3.6" stroke-linecap="round" opacity=".8"/>
<path d="M160.8 439.6 L180.2 430.2" stroke="#3bab74" stroke-width="1.7" stroke-linecap="round"/>
<rect x="130.4" y="-2" width="1357.3" height="67.8" fill="#f7f7f7"/>
<g fill="none" stroke="#444" stroke-width="1.5" stroke-linejoin="round" stroke-linecap="round" ><path d="M137.5 27 L166 27 L166 51.5 L137.5 51.5Z M137.5 27 L151 10.5 L179 10.5 L166 27 M179 10.5 L179 36"/><circle cx="178.2" cy="41.3" r="9.2" fill="#f7f7f7"/><path d="M172.4 41.3H184 M178.2 35.5V47.1"/></g>
<g fill="none" stroke="#444" stroke-width="1.5" stroke-linejoin="round" stroke-linecap="round" ><path d="M198.8 11.5V51M206.7 11.5V51M214.6 11.5V51M222.5 11.5V51M230.4 11.5V51M238.3 11.5V51M198.8 11.5H238.3M198.8 19.4H238.3M198.8 27.3H238.3M198.8 35.2H238.3M198.8 43.1H238.3M198.8 51H238.3"/><circle cx="235.6" cy="41.6" r="9.2" fill="#f7f7f7"/><path d="M229.8 41.6H241.4 M235.6 35.8V47.4"/></g>
<g fill="none" stroke="#444" stroke-width="1.5" stroke-linejoin="round" stroke-linecap="round" ><path d="M281 12 L305.5 18.5 L299 42.5 L274.5 36Z"/><rect x="263" y="50.2" width="39" height="3.6" rx="1.8"/><path d="M271 30.5 L262 38.5"/><path d="M260.5 35.5 L262.5 45.5 L270 39.5Z"/></g>
<text x="258" y="24.5" font-size="6.6" font-weight="bold" fill="#3d3d3d" textLength="17.5" lengthAdjust="spacingAndGlyphs">AUTO</text>
<g fill="none" stroke="#444" stroke-width="1.6" stroke-linejoin="round" stroke-linecap="round" ><rect x="319" y="11" width="43.5" height="43.5" rx="1"/><rect x="324.5" y="16" width="32.5" height="11" rx="1"/><rect x="324.5" y="32" width="9.5" height="17" rx="1"/><rect x="338.5" y="32" width="18.5" height="6.5" rx="1"/><rect x="338.5" y="42.5" width="18.5" height="6.5" rx="1"/></g>
<g fill="none" stroke="#d2d2d2" stroke-width="1.3" stroke-linejoin="round" stroke-linecap="round" ><path d="M391 13 H410 L416 19 V46 H391Z"/><path d="M397 21 H420 L431 32 V56.5 H397Z" fill="#f7f7f7"/><ellipse cx="414" cy="38" rx="5.5" ry="10"/></g>
<g fill="none" stroke="#d2d2d2" stroke-width="1.3" stroke-linejoin="round" stroke-linecap="round" ><path d="M449 13 H468 L474 19 V46 H449Z"/><path d="M455 21 H478 L489.5 32 V56.5 H455Z" fill="#f7f7f7"/><path d="M467 48 V29 H474 Q480 29 480 34.5 Q480 40 474 40 H467"/></g>
<g fill="none" stroke="#d2d2d2" stroke-width="1.2" stroke-linejoin="round" stroke-linecap="round" ><path d="M510 16H550"/><path d="M510 21.9H550"/><path d="M510 27.8H550"/><path d="M510 33.7H550"/><path d="M510 39.6H550"/><path d="M510 45.5H550"/><path d="M510 51.4H550"/></g>
<rect x="579.3" y="11.5" width="1.6" height="42" fill="#555"/>
<g fill="none" stroke="#d2d2d2" stroke-width="1.3" stroke-linejoin="round" stroke-linecap="round" ><path d="M629 11 L635.5 18 H632 V23 H626 V18 H622.5Z M629 55 L635.5 48 H632 V43 H626 V48 H622.5Z M606 33 L613 26.5 V30 H618 V36 H613 V39.5Z M652 33 L645 26.5 V30 H640 V36 H645 V39.5Z"/><rect x="626.5" y="30.5" width="5" height="5"/></g>
<g fill="none" stroke="#d2d2d2" stroke-width="1.3" stroke-linejoin="round" stroke-linecap="round" ><path d="M687 25 L707 40 L687 55 L668 40Z"/><path d="M668 38 Q664 16 688 13 Q700 13 706 21"/><path d="M699 19 L711 14 L710 27Z"/></g>
<g fill="none" stroke="#d2d2d2" stroke-width="1.3" stroke-linejoin="round" stroke-linecap="round" ><rect x="729" y="31" width="23" height="23"/><path d="M729 31 V11 H771 V54 H752" stroke-dasharray="3 3"/><path d="M757 26 L766 17 M760 16 H767 V23"/></g>
<path d="M752 10 q6 -6 10 0 q4 5 9 -1" fill="none" stroke="#b7e3c8" stroke-width="2.2"/><path d="M758 15 q5 -3 8 1" fill="none" stroke="#b7e3c8" stroke-width="2"/>
<g fill="none" stroke="#d2d2d2" stroke-width="1.3" stroke-linejoin="round" stroke-linecap="round" ><path d="M810 13 L833 18.5 L826 41 L803 35.5Z"/><rect x="792" y="50.2" width="40" height="3.6" rx="1.8"/><path d="M801 32 L792 38"/><path d="M789.5 36.5 L791.5 45.5 L798 40Z"/></g>
<g fill="none" stroke="#d2d2d2" stroke-width="1.3" stroke-linejoin="round" stroke-linecap="round" ><rect x="849.5" y="11.5" width="40" height="18"/><rect x="849.5" y="36" width="40" height="18"/><path d="M849.5 32.8 H889.5" stroke-dasharray="1.5 1.5"/></g>
<g fill="none" stroke="#d2d2d2" stroke-width="1.3" stroke-linejoin="round" stroke-linecap="round" ><rect x="922" y="11.5" width="32" height="31"/><rect x="908.5" y="22.5" width="32" height="31.5"/></g>
<rect x="922.5" y="23" width="17.5" height="19" fill="#e3e3e3"/>
<g fill="none" stroke="#d2d2d2" stroke-width="1.3" stroke-linejoin="round" stroke-linecap="round" ><path d="M972 12 H1013 V54 H992 V30 H972Z"/></g>
<rect x="972.5" y="30.5" width="15.5" height="23.5" fill="#dadada"/>
<g fill="none" stroke="#d2d2d2" stroke-width="1.3" stroke-linejoin="round" stroke-linecap="round" ><path d="M1031 27 H1059 V54 H1031Z M1031 27 L1045 12 H1073 L1059 27 M1073 12 V39 L1059 54"/><path d="M1042 30 q3 12 1 22" stroke-width="0.9"/></g>
<g fill="none" stroke="#d2d2d2" stroke-width="1.3" stroke-linejoin="round" stroke-linecap="round" ><path d="M1092 12 H1125 V21 H1113.5 V53 H1103.5 V21 H1092Z"/><path d="M1133.5 53 V41 Q1133.5 35.5 1127 35.5 Q1121 35.5 1120.5 40 M1133.5 45 Q1121 44 1121 49.5 Q1121 53.5 1126 53.5 Q1131 53.5 1133.5 49.5" stroke-width="2.6"/><path d="M1133.5 53 V41 Q1133.5 35.5 1127 35.5 Q1121 35.5 1120.5 40 M1133.5 45 Q1121 44 1121 49.5 Q1121 53.5 1126 53.5 Q1131 53.5 1133.5 49.5" stroke="#f7f7f7" stroke-width="0.8"/></g>
<g fill="none" stroke="#d2d2d2" stroke-width="1.3" stroke-linejoin="round" stroke-linecap="round" ><path d="M1151 32 L1172 13 L1192 32 L1172 52Z"/><path d="M1151 32 H1192"/><path d="M1155 11 L1168 25" stroke-width="2.6"/><path d="M1191 36 Q1198 48 1197 51 Q1196 56 1191 56 Q1186 56 1185 51 Q1185 47 1191 36Z"/></g>
<g fill="none" stroke="#d2d2d2" stroke-width="1.1" stroke-linejoin="round" stroke-linecap="round" ><rect x="1213.5" y="23" width="41" height="19.5"/><path d="M1217 23 v6"/><path d="M1220.8 23 v3.5"/><path d="M1224.6 23 v6"/><path d="M1228.4 23 v3.5"/><path d="M1232.2 23 v6"/><path d="M1236 23 v3.5"/><path d="M1239.8 23 v6"/><path d="M1243.6 23 v3.5"/><path d="M1247.4 23 v6"/><path d="M1251.2 23 v3.5"/></g>
<g fill="none" stroke="#d2d2d2" stroke-width="1.3" stroke-linejoin="round" stroke-linecap="round" ><rect x="1277.5" y="40" width="40.5" height="13"/><path d="M1288 30 H1308 V40 H1288Z"/><path d="M1293 13 L1311 20 L1306.5 31 L1288.5 24Z"/><path d="M1284 22 L1276 29 M1274 25 L1275 33 L1282 30Z"/></g>
<g fill="none" stroke="#d2d2d2" stroke-width="1.3" stroke-linejoin="round" stroke-linecap="round" ><rect x="1340" y="20" width="28" height="27"/><circle cx="1340" cy="20" r="6.5"/><circle cx="1368" cy="20" r="6.5"/><circle cx="1340" cy="47" r="6.5"/><circle cx="1368" cy="47" r="6.5"/></g>
<rect x="1341" y="21" width="26" height="25" fill="#f7f7f7"/>
<rect x="1404.3" y="11.5" width="1.6" height="42" fill="#555"/>
<g fill="none" stroke="#444" stroke-width="1.5" stroke-linejoin="round" stroke-linecap="round" ><path d="M1432.5 21.5 H1447 Q1446 26.5 1449.5 26.5 Q1453 26.5 1452 21.5 M1452 21.5 L1452.5 21.5 M1432.5 21.5 V54.5 H1467 V37.5 M1449.5 54.5 V46 Q1445 47.5 1445 43.5 Q1445 40 1449.5 41 V37.5 M1432.5 37.5 H1438 Q1437 42 1441 42 Q1445 42 1444 37.5 H1449.5 M1449.5 37.5 H1455 Q1454 33 1458 33 Q1462 33 1461 37.5 H1467"/><path d="M1452.5 21 L1463.5 10 L1467 13.5 Q1470 10.5 1472.5 13 Q1475 15.5 1472 18.5 L1476.5 23 L1465.5 34 L1462 30.5 Q1459 33 1456.5 30.5 Q1454.5 28 1457 25.5Z" fill="#f7f7f7"/></g>
<path d="M1268.3 136.8 L1284.5 146.1 L1284.5 162.9 L1268.3 153.6 Z" fill="#f0641e"/>
<path d="M1268.3 172.9 L1284.5 164.1 L1284.5 181.3 L1268.3 190.7 Z" fill="#f36f26"/>
<path d="M1287 161 L1332.3 136.8 L1332.3 155.7 L1300.8 172.9 L1287 165.4 Z" fill="#f26a21"/>
<path d="M1317.2 167 L1332.3 172.9 L1332.3 190.7 L1317.2 181.7 Z" fill="#f36f26"/>
<text x="1362.6" y="179.3" font-size="43" fill="#2b1b19" stroke="#2b1b19" stroke-width="0.9" textLength="190" lengthAdjust="spacingAndGlyphs">Meme3D</text>
<defs><linearGradient id="vc1" x1="0" y1="0" x2="0" y2="1"><stop offset="0" stop-color="#cacaca"/><stop offset="1" stop-color="#bdbdbd"/></linearGradient></defs>
<path d="M98.3 913.3 L156.7 965 L85 1003.3 L26.7 955 Z" fill="#cdcdcd" opacity="0.96"/>
<path d="M26.7 955 L85 1003.3 L85 1066.7 L26.7 1006.7 Z" fill="url(#vc1)" opacity="0.96"/>
<path d="M85 1003.3 L156.7 965 L156.7 1020 L85 1066.7 Z" fill="#c9c9c9" opacity="0.96"/>
<path d="M85 1066.7 L30.9 1016.2" stroke="#6fc47a" stroke-width="2.4"/>
<path d="M22.5 1008.3 L34 1012.8 L27.8 1019.5 Z" fill="#6fc47a"/>
<path d="M85 1066.7 L150.7 1025.1" stroke="#cf6a70" stroke-width="2.5"/>
<path d="M160.8 1018.7 L153.3 1029.1 L148.1 1021 Z" fill="#cf6a70"/>
<path d="M85 1066.7 L85 1018.2" stroke="#7e7ac8" stroke-width="3.5"/>
<path d="M85 1003.7 L91 1018.2 L79 1018.2 Z" fill="#7e7ac8"/>
<text x="3.2" y="1000" font-size="13" fill="#9cbfa0">y</text>
<text x="79.8" y="999.3" font-size="13" fill="#9795c2">z</text>
<text x="171.8" y="1014.3" font-size="13" fill="#c2a0a2">x</text>
<text transform="matrix(0.816,-0.578,0.326,0.945,81.7,975.9)" x="0" y="0" font-size="14.5" fill="#3a3a3a" stroke="#3a3a3a" stroke-width="0.3" style="font-family:'Liberation Sans','Noto Sans CJK SC',sans-serif">顶部</text>
<text transform="matrix(0.76,0.65,-0.58,0.81,42.1,1007.3)" x="0" y="0" font-size="14" fill="#3a3a3a" stroke="#3a3a3a" stroke-width="0.3" style="font-family:'Liberation Sans','Noto Sans CJK SC',sans-serif">左侧</text>
<text transform="matrix(0.854,-0.52,0.327,0.945,109.7,1029.1)" x="0" y="0" font-size="14" fill="#3a3a3a" stroke="#3a3a3a" stroke-width="0.3" style="font-family:'Liberation Sans','Noto Sans CJK SC',sans-serif">前面</text>
<circle cx="217.8" cy="1034" r="24.2" fill="#fafafa"/>
<g fill="none" stroke="#555" stroke-width="2.3" stroke-linejoin="round" stroke-linecap="round" ><path d="M204.6 1029.5 V1024 Q204.6 1021 207.6 1021 H212 M223.6 1021 H228 Q231 1021 231 1024 V1029.5 M231 1038.5 V1044 Q231 1047 228 1047 H223.6 M212 1047 H207.6 Q204.6 1047 204.6 1044 V1038.5"/><path d="M217.8 1025.8 L225 1029.9 V1038.1 L217.8 1042.2 L210.6 1038.1 V1029.9Z M210.6 1029.9 L217.8 1034 L225 1029.9 M217.8 1034 V1042.2"/></g>
<rect x="1551.3" y="1014.6" width="45" height="43.6" rx="5" fill="#d3e8f9" opacity="0.85"/>
<rect x="1552.8" y="1016.2" width="42" height="40.6" rx="3.5" fill="#80b5f0"/>
<text x="1574" y="1044.8" font-size="24" font-weight="bold" fill="#f2f7fd" text-anchor="middle" style="font-family:'Liberation Sans','Noto Sans CJK SC',sans-serif">托</text>
</svg></body></html>
